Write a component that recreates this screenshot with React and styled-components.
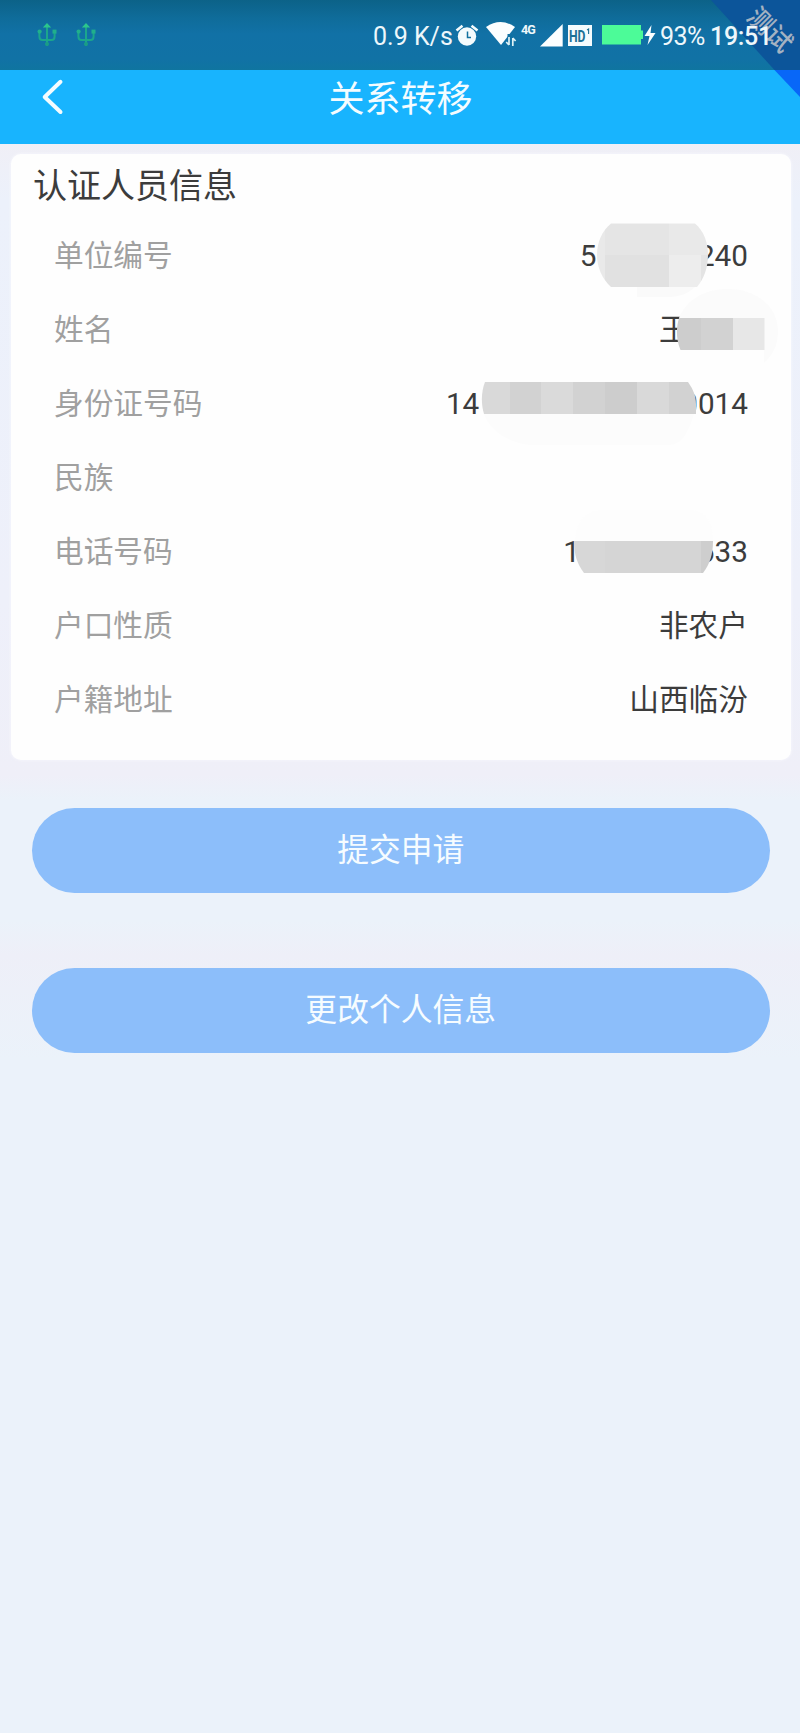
import React from 'react';
import styled, { createGlobalStyle } from 'styled-components';

const GlobalStyle = createGlobalStyle`
  * {
    box-sizing: border-box;
  }

  body {
    margin: 0;
    font-family: Roboto, 'Noto Sans CJK SC', sans-serif;
  }
`;

const Screen = styled.div`
  position: relative;
  width: 800px;
  height: 1733px;
  overflow: hidden;
  background: linear-gradient(
    to bottom,
    #f0eff6 143px,
    #ecf1fb 200px,
    #eef0fa 600px,
    #efeff8 775px,
    #ebf2fa 800px,
    #ebf2fa 920px,
    #eeeff8 955px,
    #ebf2fa 1060px,
    #ebf2fa 100%
  );
`;

// Status bar
const StatusBar = styled.div`
  display: flex;
  justify-content: space-between;
  height: 70px;
  padding: 0 28px 0 37px;
  color: #eef7fb;
  background: linear-gradient(to bottom, #0c6288 0, #0f6c9a 18px, #1171a6 34px, #1172a5 60px, #0f75a0 70px);
`;

const StatusGroup = styled.div`
  position: relative;
  z-index: 2;
  display: flex;
  height: 70px;
`;

const StatusIcon = styled.svg`
  display: block;
  flex: none;
  width: ${(props) => props.$width}px;
  height: 70px;
  margin-right: ${(props) => props.$gap || 0}px;
  overflow: visible;
`;

const StatusText = styled.span`
  flex: none;
  width: ${(props) => props.$width}px;
  font-size: 25px;
  font-weight: ${(props) => (props.$strong ? 500 : 400)};
  line-height: 73px;
  letter-spacing: ${(props) => props.$spacing || 0}px;
  white-space: nowrap;
`;

const NetworkType = styled.span`
  flex: none;
  width: 19px;
  font-size: 12.5px;
  font-weight: 700;
  line-height: 60px;
  letter-spacing: -0.8px;
  white-space: nowrap;
`;

// Corner ribbon for the test build
const Ribbon = styled.svg`
  position: absolute;
  z-index: 1;
  top: 0;
  right: 0;
  width: 90px;
  height: 100px;
`;

// Title bar
const NavBar = styled.header`
  display: grid;
  grid-template-columns: 100px 1fr 100px;
  height: 73.5px;
  background: #18b4fe;
`;

const BackButton = styled.button`
  padding: 0;
  border: none;
  background: none;

  svg {
    display: block;
  }
`;

const NavTitle = styled.h1`
  margin: 0;
  padding-left: 1px;
  color: #f4fcff;
  font-size: 36px;
  font-weight: 400;
  line-height: 60px;
  text-align: center;
`;

// Information card
const Card = styled.section`
  width: 780px;
  height: 606px;
  margin: 10px 0 0 10.5px;
  padding: 0 42.5px 0 43.5px;
  border-radius: 10px;
  background: #fefefe;
  box-shadow: 0 0 3px #fafaff;
`;

const CardTitle = styled.h2`
  height: 65px;
  margin: 0 0 0 -21px;
  color: #3c3c3c;
  font-size: 34px;
  font-weight: 400;
  line-height: 65px;
`;

const Row = styled.div`
  position: relative;
  display: flex;
  justify-content: space-between;
  height: 74px;
  font-size: 29.7px;
  line-height: 73px;
`;

const Label = styled.span`
  color: #a0a0a0;
`;

const Value = styled.span`
  display: flex;
  color: #3c3c3c;
`;

const Gap = styled.span`
  width: ${(props) => props.$width}px;
`;

const Mosaic = styled.svg`
  position: absolute;
  z-index: 1;
  top: 0;
  right: -34px;
  width: 400px;
  height: 74px;
  overflow: visible;
`;

// Buttons
const Actions = styled.div`
  display: grid;
  gap: 75px;
  padding: 48.5px 30.5px 0 32px;
`;

const ActionButton = styled.button`
  height: 85px;
  padding: 0;
  border: none;
  border-radius: 43px;
  color: #f6fcff;
  background: #8cbefa;
  font-family: inherit;
  font-size: 31.8px;
  line-height: 85px;
`;

// Mosaic shapes share one coordinate space: x is the screen column, y starts at the row top
const mosaics = {
  unit: {
    outline: 'M611 4.5H695C704 12 708 24 708 36C708 48 704 60 697 68H611C602 60 597 48 597 36C597 23 602 12 611 4.5Z',
    tiles: [
      [597, 3, 8, 66, '#e9e9e9'],
      [605, 3, 64, 33, '#e5e5e5'],
      [669, 3, 39, 33, '#e9e9e9'],
      [605, 36, 64, 33, '#e1e1e1'],
      [669, 36, 32, 33, '#ededed'],
      [701, 36, 8, 33, '#e4e4e4'],
    ],
    haze: 'M637 67H696C689 74 680 78 669 78H637Z',
  },
  name: {
    haze: 'M679 25C687 6 705 -4 728 -4C757 -4 778 14 778 38C778 52 773 62 764 70V25Z',
    outline: 'M679 25H764.5V57H680.5C676 46 676 35 679 25Z',
    tiles: [
      [675, 25, 26, 32, '#cdcdcd'],
      [701, 25, 32, 32, '#d2d2d2'],
      [733, 25, 32, 32, '#e7e7e7'],
    ],
  },
  id: {
    haze: 'M484 47H694C688 66 682 78 668 78H536C510 78 490 64 484 47Z',
    outline: 'M485 15H688C693 22 696 29 696 37V47H484C481 37 481 25 485 15Z',
    tiles: [
      [480, 15, 30, 32, '#d9d9d9'],
      [510, 15, 31, 32, '#d2d2d2'],
      [541, 15, 32, 32, '#dadada'],
      [573, 15, 32, 32, '#d2d2d2'],
      [605, 15, 32, 32, '#cdcdcd'],
      [637, 15, 32, 32, '#d9d9d9'],
      [669, 15, 28, 32, '#d2d2d2'],
    ],
  },
  phone: {
    haze: 'M575 26C576 6 586 -5 602 -5H690C706 -5 713 8 713 26Z',
    outline: 'M574 26H713C713 39 710 49 703 58H584C577 49 574 39 574 26Z',
    tiles: [
      [574, 26, 31, 32, '#d7d7d7'],
      [605, 26, 96, 32, '#d5d5d5'],
      [701, 26, 12, 32, '#cecece'],
    ],
  },
};

const hazeColors = { unit: '#fafafa', name: '#fbfbfb', id: '#fcfcfc', phone: '#fdfdfd' };

const rows = [
  { label: '单位编号', head: '5', gap: 101.4, tail: '240', mosaic: 'unit' },
  { label: '姓名', head: '王', gap: 59.4, mosaic: 'name' },
  { label: '身份证号码', head: '14', gap: 202, tail: '0014', mosaic: 'id' },
  { label: '民族' },
  { label: '电话号码', head: '1', gap: 118, tail: '633', mosaic: 'phone' },
  { label: '户口性质', head: '非农户' },
  { label: '户籍地址', head: '山西临汾' },
];

const MosaicMask = ({ name }) => {
  const { outline, tiles, haze } = mosaics[name];
  return (
    <Mosaic viewBox="382 0 400 74" aria-hidden="true">
      <clipPath id={`mosaic-${name}`}>
        <path d={outline} />
      </clipPath>
      <path d={haze} fill={hazeColors[name]} />
      <g clipPath={`url(#mosaic-${name})`} shapeRendering="crispEdges">
        {tiles.map(([x, y, width, height, fill]) => (
          <rect key={`${x}-${y}`} x={x} y={y} width={width} height={height} fill={fill} />
        ))}
      </g>
    </Mosaic>
  );
};

const UsbIcon = ({ gap }) => (
  <StatusIcon $width={20} $gap={gap} viewBox="0 0 20 70" fill="none" stroke="#1ba68c" strokeWidth="2">
    <path d="M10 27V46M2.4 32V36.5Q2.4 40 5.6 40H14.4Q17.6 40 17.6 36.5V32" />
    <path d="M10 24L12.8 27H7.2Z" fill="#2cc68c" stroke="#2cc68c" strokeWidth="1.2" />
    <circle cx="2.6" cy="31.6" r="2.1" fill="#20b08c" stroke="none" />
    <rect x="15.5" y="29.6" width="4" height="4" fill="#20b08c" stroke="none" />
    <circle cx="10" cy="44" r="2.1" fill="#1a9c86" stroke="none" />
  </StatusIcon>
);

const App = () => {
  return (
    <>
      <GlobalStyle />
      <Screen>
        <StatusBar>
          <StatusGroup>
            <UsbIcon gap={19} />
            <UsbIcon />
          </StatusGroup>
          <StatusGroup>
            <StatusText $width={82}>0.9 K/s</StatusText>
            {/* alarm */}
            <StatusIcon $width={24} $gap={7} viewBox="455 0 24 70">
              <circle cx="467" cy="36.5" r="9.2" fill="#f4fbfd" />
              <path d="M456.5 30.5L462.5 25.7M471.5 25.7L477.5 30.5" stroke="#f4fbfd" strokeWidth="2.6" fill="none" />
              <path d="M467.5 31.5V37.5H471" stroke="#11719f" strokeWidth="1.5" fill="none" />
            </StatusIcon>
            {/* wifi */}
            <StatusIcon $width={30} $gap={5} viewBox="486 0 30 70">
              <path d="M486 27Q500.5 17 515 27L501 45Z" fill="#fbfeff" />
              <path d="M507.5 34H517V46H503.5L507.5 40Z" fill="#1071a4" />
              <path d="M509 37V45M506.2 42L509 45M512.8 46V38M512.8 38L515.6 41" stroke="#e0f2f6" strokeWidth="1.7" fill="none" />
            </StatusIcon>
            <NetworkType>4G</NetworkType>
            {/* signal */}
            <StatusIcon $width={23} $gap={5} viewBox="540 0 23 70">
              <path d="M540 46.5L562.7 24V46.5Z" fill="#fbfeff" />
            </StatusIcon>
            <StatusIcon $width={24} $gap={10} viewBox="568 0 24 70">
              <rect x="568" y="25" width="24" height="21" fill="#f4fbfd" />
              <text x="569" y="41.5" textLength="16.5" lengthAdjust="spacingAndGlyphs" fontSize="16.5" fontWeight="700" fill="#1c7196">
                HD
              </text>
              <path d="M587 30L588.6 29V34" stroke="#1c7196" strokeWidth="1.1" fill="none" />
            </StatusIcon>
            {/* battery and charging bolt */}
            <StatusIcon $width={54} $gap={4} viewBox="602 0 54 70">
              <path d="M602 25H641V30.5H643V39H641V44.5H602Z" fill="#4cfb98" />
              <path d="M651.5 25L644.5 36H649.5L647.5 45L655.5 33H650.5Z" fill="#fbfeff" />
            </StatusIcon>
            <StatusText $width={50} $spacing={-0.5}>93%</StatusText>
            <StatusText $width={62} $strong $spacing={-0.3}>19:51</StatusText>
          </StatusGroup>
        </StatusBar>

        <Ribbon viewBox="710 0 90 100">
          <path d="M711 0H800V70H774.5Z" fill="#0c559a" />
          <path d="M774.5 70H800V97Z" fill="#0867f8" />
          <text
            transform="translate(770 30) rotate(45)"
            textAnchor="middle"
            y="9"
            fontSize="25.5"
            fontWeight="500"
            fill="#a4b2c2"
          >
            测试
          </text>
        </Ribbon>

        <NavBar>
          <BackButton aria-label="返回">
            <svg width="100" height="74" viewBox="0 70 100 74" fill="none">
              <path d="M60.5 81.8L44.7 97L60.5 112" stroke="#f4fcff" strokeWidth="4" strokeLinecap="round" strokeLinejoin="round" />
            </svg>
          </BackButton>
          <NavTitle>关系转移</NavTitle>
        </NavBar>

        <Card>
          <CardTitle>认证人员信息</CardTitle>
          {rows.map((row) => (
            <Row key={row.label}>
              <Label>{row.label}</Label>
              <Value>
                {row.head}
                {row.gap && <Gap $width={row.gap} />}
                {row.tail}
              </Value>
              {row.mosaic && <MosaicMask name={row.mosaic} />}
            </Row>
          ))}
        </Card>

        <Actions>
          <ActionButton>提交申请</ActionButton>
          <ActionButton>更改个人信息</ActionButton>
        </Actions>
      </Screen>
    </>
  );
};

export default App;
